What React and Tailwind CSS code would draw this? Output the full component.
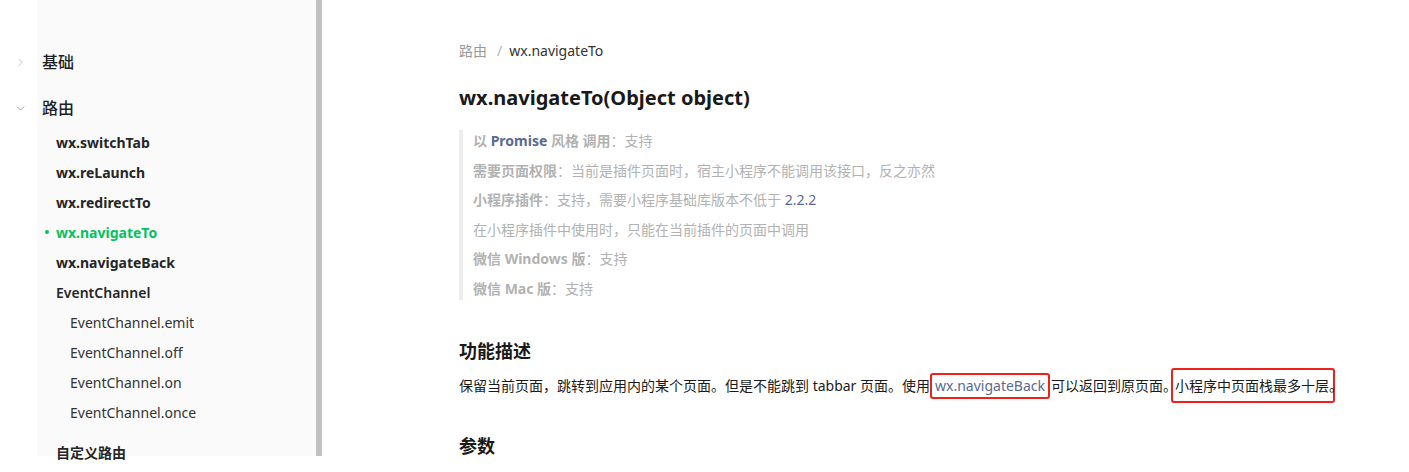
import React from 'react';
import { ChevronRight, ChevronDown } from 'lucide-react';

const font = { fontFamily: '"Noto Sans", "Noto Sans CJK SC", sans-serif' };

const routeItems = ['wx.switchTab', 'wx.reLaunch', 'wx.redirectTo', 'wx.navigateTo', 'wx.navigateBack'];
const channelItems = ['EventChannel.emit', 'EventChannel.off', 'EventChannel.on', 'EventChannel.once'];

function Sidebar() {
  return (
    <div className="flex w-[322px] shrink-0 h-full">
      <div className="relative flex-1 h-full">
        <div className="absolute left-[37px] right-0 top-0 bottom-[16px] bg-[#fafafa]" />
        <div className="relative pt-[47px]">
          {/* group: 基础 */}
          <div className="flex items-center h-[30px]">
            <ChevronRight size={13} strokeWidth={1.5} className="ml-[14px] text-[#b8b8b8]" />
            <span className="ml-[15px] text-[16px] font-medium text-[#1f1f1f]">基础</span>
          </div>

          {/* group: 路由 */}
          <div className="flex items-center h-[30px] mt-[16px]">
            <ChevronDown size={13} strokeWidth={1.5} className="ml-[14px] text-[#8a8a8a]" />
            <span className="ml-[15px] text-[16px] font-medium text-[#1f1f1f]">路由</span>
          </div>

          <div className="mt-[4px]">
            {routeItems.map((item) => {
              const active = item === 'wx.navigateTo';
              return (
                <div key={item} className="relative flex items-center h-[30px] pl-[56px]">
                  {active && <span className="absolute left-[45px] top-[13px] w-[4px] h-[4px] rounded-full bg-[#07c160]" />}
                  <span className={active ? 'text-[14px] font-bold text-[#07c160]' : 'text-[14px] font-bold text-[#262626]'}>{item}</span>
                </div>
              );
            })}
            <div className="flex items-center h-[30px] pl-[56px]">
              <span className="text-[14px] font-semibold text-[#262626]">EventChannel</span>
            </div>
            {channelItems.map((item) => (
              <div key={item} className="flex items-center h-[30px] pl-[70px]">
                <span className="text-[14px] text-[#333]">{item}</span>
              </div>
            ))}
            <div className="flex items-center h-[30px] pl-[56px] mt-[10px]">
              <span className="text-[14px] font-semibold text-[#262626]">自定义路由</span>
            </div>
          </div>
        </div>
      </div>
      <div className="w-[6px] h-[456px] bg-[#c1c1c1]" />
    </div>
  );
}

function Label({ children }) {
  return <span className="font-bold text-[#b2b2b2]">{children}</span>;
}

export default function App() {
  return (
    <div className="flex h-[472px] w-[1409px] overflow-hidden bg-white" style={font}>
      <Sidebar />

      <div className="pl-[137px] pt-[39px]">
        {/* BREADCRUMB */}
        <div className="flex items-center h-[22px] text-[14px]">
          <span className="text-[#999]">路由</span>
          <span className="ml-[10px] text-[#b2b2b2]">/</span>
          <span className="ml-[7px] text-[#333]">wx.navigateTo</span>
        </div>

        {/* TITLE */}
        <h1 className="mt-[22px] h-[30px] leading-[30px] text-[20px] font-bold text-[#1a1a1a]">wx.navigateTo(Object object)</h1>

        {/* SUPPORT INFO */}
        <div className="mt-[17px] border-l-4 border-[#ededed] pl-[10px] flex flex-col gap-[7.5px] text-[14px] leading-[22px] text-[#b2b2b2]">
          <p>
            <Label>以 </Label>
            <span className="font-bold text-[#576b95]">Promise</span>
            <Label> 风格 调用</Label>：支持
          </p>
          <p><Label>需要页面权限</Label>：当前是插件页面时，宿主小程序不能调用该接口，反之亦然</p>
          <p><Label>小程序插件</Label>：支持，需要小程序基础库版本不低于 <span className="text-[#576b95]">2.2.2</span></p>
          <p>在小程序插件中使用时，只能在当前插件的页面中调用</p>
          <p><Label>微信 Windows 版</Label>：支持</p>
          <p><Label>微信 Mac 版</Label>：支持</p>
        </div>

        {/* DESCRIPTION */}
        <h2 className="mt-[37px] h-[28px] leading-[28px] text-[18px] font-bold text-[#1a1a1a]">功能描述</h2>
        <p className="mt-[3px] h-[36px] flex items-center text-[14px] text-[#1a1a1a] whitespace-nowrap">
          保留当前页面，跳转到应用内的某个页面。但是不能跳到 tabbar 页面。使用
          <span className="inline-flex items-center h-[26px] px-[3px] border-2 border-[#f0201a] rounded-[3px] text-[#576b95]">wx.navigateBack</span>
          <span className="ml-[1px]">可以返回到原页面。</span>
          <span className="inline-flex items-center ml-[-6px] w-[164px] h-[35px] pl-[2px] border-2 border-[#f0201a] rounded-[3px] whitespace-nowrap">小程序中页面栈最多十层。</span>
        </p>

        <h2 className="mt-[28px] h-[28px] leading-[28px] text-[18px] font-bold text-[#1a1a1a]">参数</h2>
      </div>
    </div>
  );
}
